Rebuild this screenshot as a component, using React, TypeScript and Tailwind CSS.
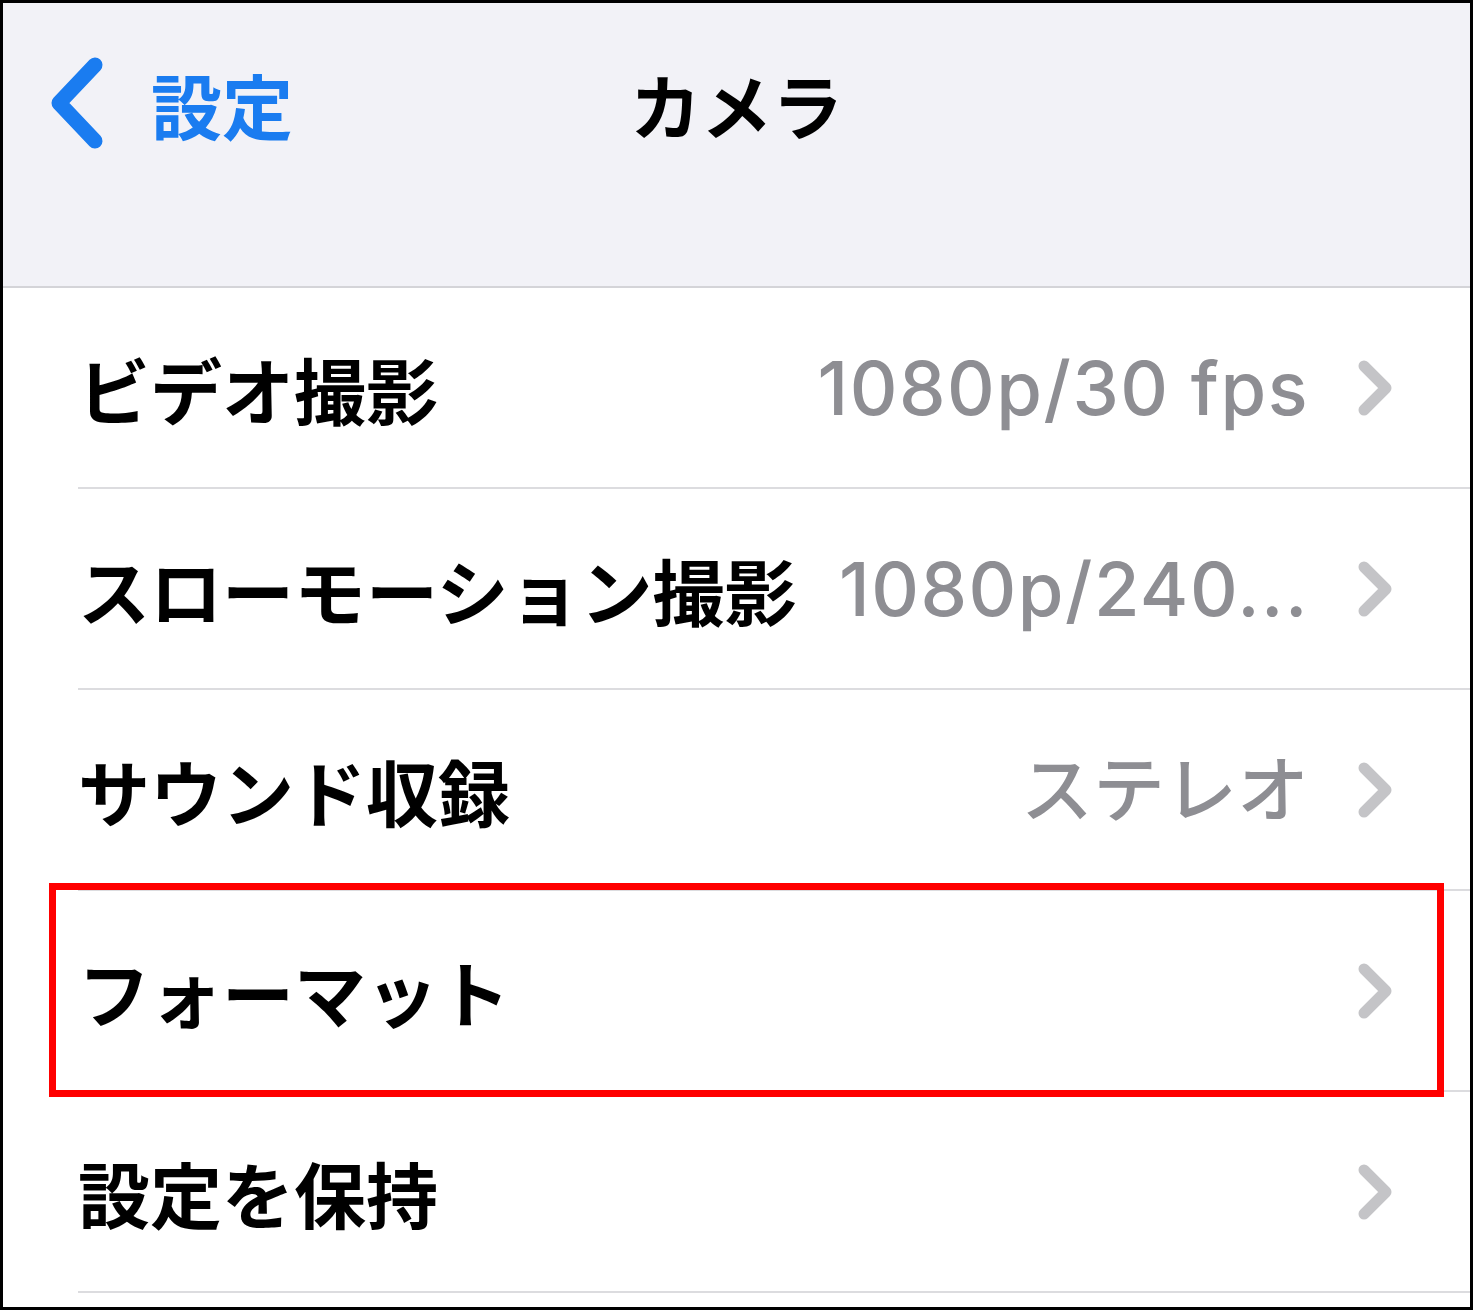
const rows = [
  { label: 'ビデオ撮影', value: '1080p/30 fps', latin: true },
  { label: 'スローモーション撮影', value: '1080p/240...', latin: true },
  { label: 'サウンド収録', value: 'ステレオ', latin: false },
  { label: 'フォーマット', value: '', latin: false },
  { label: '設定を保持', value: '', latin: false },
];

const jp = { fontFamily: '"Noto Sans CJK JP", sans-serif' };
const val = { fontFamily: 'Inter, "Noto Sans CJK JP", sans-serif' };

function Chevron() {
  return (
    <svg width="40" height="60" viewBox="0 0 40 60" className="shrink-0 ml-[2px]">
      <path d="M9 8 L31 30 L9 52" fill="none" stroke="#c4c4c7" strokeWidth="11" strokeLinecap="round" strokeLinejoin="round" />
    </svg>
  );
}

export default function App() {
  return (
    <div className="w-[1475px] h-[1312px] bg-white">
      <div className="relative w-[1473px] h-[1310px] border-[3px] border-black bg-white overflow-hidden">
        <div className="h-[285px] bg-[#f2f2f7] border-b-2 border-[#d4d4d8] relative">
          <div className="flex items-center h-[200px] pl-[40px]">
            <svg width="64" height="100" viewBox="0 0 64 100">
              <path d="M52 12 L16 50 L52 88" fill="none" stroke="#1a7cf0" strokeWidth="15" strokeLinecap="round" strokeLinejoin="round" />
            </svg>
            <span className="ml-[44px] text-[71px] font-bold text-[#1a7cf0] leading-none" style={jp}>
              設定
            </span>
          </div>
          <div className="absolute left-0 right-0 top-0 h-[200px] flex items-center justify-center">
            <span className="text-[71px] font-bold text-black leading-none" style={jp}>
              カメラ
            </span>
          </div>
        </div>
        <div className="pl-[75px]">
          {rows.map((r, i) => (
            <div key={i} className="h-[201px] flex items-center border-b-2 border-[#dcdcdf] pr-[75px]">
              <span className="text-[72px] font-bold text-black leading-none" style={jp}>
                {r.label}
              </span>
              <span
                className={
                  r.latin
                    ? 'flex-1 text-right text-[74px] font-medium tracking-[1.5px] text-[#8e8e93] leading-none pr-[44px]'
                    : 'flex-1 text-right text-[72px] font-medium text-[#8e8e93] leading-none pr-[44px]'
                }
                style={val}
              >
                {r.value}
              </span>
              <Chevron />
            </div>
          ))}
        </div>
        <div className="absolute left-[46px] top-[880px] w-[1395px] h-[214px] border-[7px] border-[#ff0000]" />
      </div>
    </div>
  );
}
